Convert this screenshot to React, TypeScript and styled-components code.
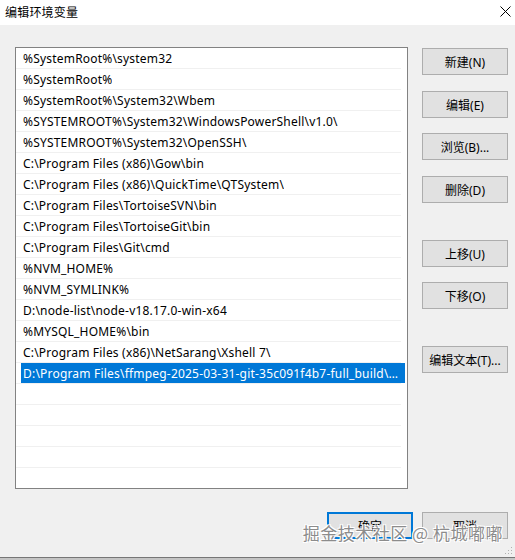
import React from 'react';
import styled, { createGlobalStyle } from 'styled-components';

// 窗口配色，按 Win10 经典对话框取值
const ui = {
  face: '#f0f0f0',
  btnFace: '#e1e1e1',
  btnBorder: '#adadad',
  listBorder: '#828282',
  accent: '#0078d7',
  font: '"Noto Sans", "Noto Sans CJK SC", sans-serif',
};

const GlobalStyle = createGlobalStyle`
  html, body {
    margin: 0;
    padding: 0;
    background: #ffffff;
  }
  #root {
    width: 515px;
    height: 560px;
  }
`;

const Window = styled.div`
  position: relative;
  width: 515px;
  height: 560px;
  display: flex;
  flex-direction: column;
  font-family: ${ui.font};
  font-size: 12px;
  color: #000;
  overflow: hidden;
`;

const TitleBar = styled.div`
  height: 25px;
  flex-shrink: 0;
  background: #ffffff;
  display: flex;
  align-items: center;
  justify-content: space-between;
  padding: 0 3px 2px 5px;
  box-sizing: border-box;
`;

const Title = styled.span`
  font-size: 12px;
  letter-spacing: 0.2px;
  color: #000;
`;

const CloseButton = styled.span`
  width: 14px;
  height: 14px;
  display: flex;
  align-items: center;
  justify-content: center;
`;

const Body = styled.div`
  flex: 1;
  background: ${ui.face};
  padding: 22px 7px 0 15px;
  display: flex;
  flex-direction: column;
  border-bottom: 1px solid #767676;
`;

const Content = styled.div`
  display: flex;
  gap: 14px;
`;

const PathList = styled.div`
  width: 393px;
  height: 442px;
  box-sizing: border-box;
  border: 1px solid ${ui.listBorder};
  background: #ffffff;
  overflow: hidden;
`;

const Row = styled.div`
  height: 21px;
  box-sizing: border-box;
  border-bottom: 1px solid #f0f0f0;
  margin-right: 6px;
`;

const Cell = styled.div<{ $selected?: boolean }>`
  height: 20px;
  margin-left: 5px;
  margin-right: -4px;
  padding: 0 2px;
  display: flex;
  align-items: center;
  white-space: nowrap;
  overflow: hidden;
  letter-spacing: 0.2px;
  background: ${(p) => (p.$selected ? ui.accent : 'transparent')};
  color: ${(p) => (p.$selected ? '#ffffff' : '#000000')};

  & > span {
    overflow: hidden;
    text-overflow: ellipsis;
  }
`;

const SideButtons = styled.div`
  display: flex;
  flex-direction: column;
  padding-top: 1px;
`;

const Button = styled.button<{ $gap?: number; $default?: boolean }>`
  width: 86px;
  height: 27px;
  box-sizing: border-box;
  margin: ${(p) => p.$gap ?? 0}px 0 0 0;
  padding: 0;
  font-family: ${ui.font};
  font-size: 12px;
  color: #000;
  background: ${ui.btnFace};
  border: ${(p) => (p.$default ? `2px solid ${ui.accent}` : `1px solid ${ui.btnBorder}`)};
  border-radius: 0;
  cursor: default;
`;

const Footer = styled.div`
  display: flex;
  justify-content: flex-end;
  gap: 9px;
  margin-top: 23px;
`;

const BottomEdge = styled.div`
  height: 2px;
  background: #c4c4c4;
`;

const Watermark = styled.div`
  position: absolute;
  right: 12px;
  bottom: 15px;
  font-family: "Noto Sans CJK SC", sans-serif;
  font-size: 17px;
  letter-spacing: 0.5px;
  color: #8c8c8c;
  text-shadow: 1px 1px 0 #ffffff, -1px -1px 0 #ffffff, 1px -1px 0 #ffffff, -1px 1px 0 #ffffff;
  pointer-events: none;
`;

const SizeGrip = styled.svg`
  position: absolute;
  right: 2px;
  bottom: 5px;
`;

const paths = [
  '%SystemRoot%\\system32',
  '%SystemRoot%',
  '%SystemRoot%\\System32\\Wbem',
  '%SYSTEMROOT%\\System32\\WindowsPowerShell\\v1.0\\',
  '%SYSTEMROOT%\\System32\\OpenSSH\\',
  'C:\\Program Files (x86)\\Gow\\bin',
  'C:\\Program Files (x86)\\QuickTime\\QTSystem\\',
  'C:\\Program Files\\TortoiseSVN\\bin',
  'C:\\Program Files\\TortoiseGit\\bin',
  'C:\\Program Files\\Git\\cmd',
  '%NVM_HOME%',
  '%NVM_SYMLINK%',
  'D:\\node-list\\node-v18.17.0-win-x64',
  '%MYSQL_HOME%\\bin',
  'C:\\Program Files (x86)\\NetSarang\\Xshell 7\\',
  'D:\\Program Files\\ffmpeg-2025-03-31-git-35c091f4b7-full_build\\bin',
];

const selectedIndex = 15;
const totalRows = 21;

const App: React.FC = () => {
  const rows = Array.from({ length: totalRows }, (_, i) => paths[i] ?? '');

  return (
    <>
      <GlobalStyle />
      <Window>
        <TitleBar>
          <Title>编辑环境变量</Title>
          <CloseButton>
            <svg width="11" height="11" viewBox="0 0 11 11">
              <path d="M0.5 0.5L10.5 10.5M10.5 0.5L0.5 10.5" stroke="#000" strokeWidth="1" />
            </svg>
          </CloseButton>
        </TitleBar>

        <Body>
          <Content>
            <PathList>
              {rows.map((p, i) => (
                <Row key={i}>
                  <Cell $selected={i === selectedIndex}>
                    <span>{p}</span>
                  </Cell>
                </Row>
              ))}
            </PathList>

            <SideButtons>
              <Button>新建(N)</Button>
              <Button $gap={16}>编辑(E)</Button>
              <Button $gap={15}>浏览(B)...</Button>
              <Button $gap={16}>删除(D)</Button>
              <Button $gap={37}>上移(U)</Button>
              <Button $gap={15}>下移(O)</Button>
              <Button $gap={37}>编辑文本(T)...</Button>
            </SideButtons>
          </Content>

          <Footer>
            <Button $default>确定</Button>
            <Button>取消</Button>
          </Footer>
        </Body>
        <BottomEdge />

        <SizeGrip width="8" height="8" viewBox="0 0 8 8">
          <rect x="6" y="0" width="1" height="1" fill="#b0b0b0" />
          <rect x="3" y="3" width="1" height="1" fill="#b0b0b0" />
          <rect x="6" y="3" width="1" height="1" fill="#b0b0b0" />
          <rect x="0" y="6" width="1" height="1" fill="#b0b0b0" />
          <rect x="3" y="6" width="1" height="1" fill="#b0b0b0" />
          <rect x="6" y="6" width="1" height="1" fill="#b0b0b0" />
        </SizeGrip>

        <Watermark>掘金技术社区 @ 杭城嘟嘟</Watermark>
      </Window>
    </>
  );
};

export default App;
